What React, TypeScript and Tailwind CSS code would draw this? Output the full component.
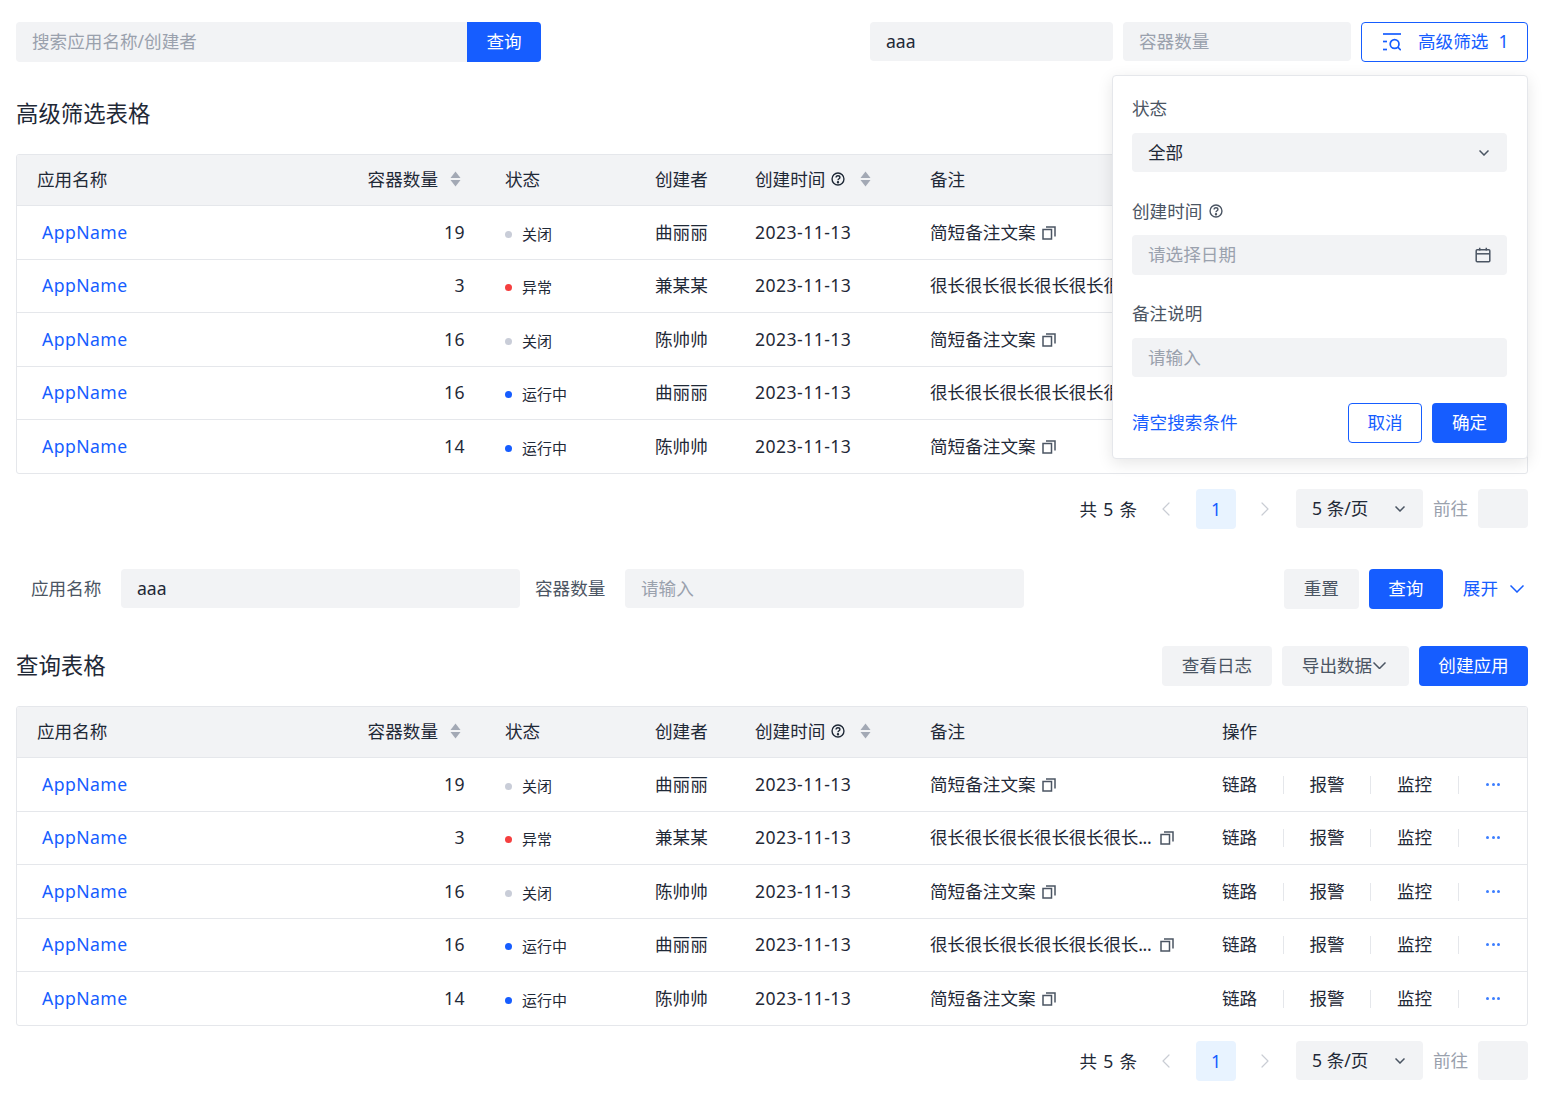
import React from 'react';
import { ChevronLeft, ChevronRight } from 'lucide-react';

const rows = [
  { count: 19, status: 'off', owner: '曲丽丽', long: false },
  { count: 3, status: 'err', owner: '兼某某', long: true },
  { count: 16, status: 'off', owner: '陈帅帅', long: false },
  { count: 16, status: 'run', owner: '曲丽丽', long: true },
  { count: 14, status: 'run', owner: '陈帅帅', long: false },
];

const rowHeights = ['h-[54px]', 'h-[53px] pb-px', 'h-[54px]', 'h-[53px] pb-px', 'h-[53px]'];

const statusMap: Record<string, { label: string; dot: string }> = {
  off: { label: '关闭', dot: 'bg-[#c9cdd8]' },
  err: { label: '异常', dot: 'bg-[#f53f3f]' },
  run: { label: '运行中', dot: 'bg-[#165dff]' },
};

const gridCols = 'grid grid-cols-[268px_200px_150px_100px_175px_292px_1fr] items-center';

const SortIcon = () => (
  <svg width="11" height="16" viewBox="0 0 11 16" className="shrink-0" fill="#a3a9b5">
    <path d="M5.5 0.5L10.5 7H0.5z" />
    <path d="M5.5 15.5L0.5 9H10.5z" />
  </svg>
);

const HelpIcon = ({ color = '#1f2937' }: { color?: string }) => (
  <svg width="14" height="14" viewBox="0 0 16 16" fill="none" stroke={color} strokeWidth="1.6" className="shrink-0">
    <circle cx="8" cy="8" r="6.8" />
    <path d="M5.8 6.4C5.8 5 6.8 4.2 8 4.2S10.2 5 10.2 6.2C10.2 7.7 8 7.7 8 9.5" />
    <circle cx="8" cy="11.8" r="0.6" fill={color} />
  </svg>
);

const CopyIcon = () => (
  <svg width="14" height="14" viewBox="0 0 14 14" fill="none" stroke="#4b5563" strokeWidth="1.5" className="shrink-0">
    <rect x="1" y="3.5" width="8.5" height="9.5" />
    <path d="M4 1H13V10.5" />
  </svg>
);

const FilterIcon = () => (
  <svg width="18" height="18" viewBox="0 0 18 18" fill="none" stroke="#165dff" strokeWidth="1.7" className="shrink-0">
    <path d="M0 1H18" />
    <path d="M0 8.5H4" />
    <path d="M0 16.5H4" />
    <circle cx="11.6" cy="11" r="4.4" />
    <path d="M14.8 14.2L17.8 17.2" />
  </svg>
);

const CalendarIcon = () => (
  <svg width="16" height="16" viewBox="0 0 16 16" fill="none" stroke="#4b5563" strokeWidth="1.5">
    <rect x="1.2" y="2.7" width="13.6" height="12" rx="1" />
    <path d="M1.2 6.8H14.8" />
    <path d="M4.7 0.8V3.5M11.3 0.8V3.5" />
  </svg>
);

const Chevron = ({ width = 10, color = '#4b5563', className }: { width?: number; color?: string; className?: string }) => (
  <svg width={width} height={width / 2 + 1} viewBox={`0 0 ${width} ${width / 2 + 1}`} fill="none" stroke={color} strokeWidth="1.5" className={`shrink-0 ${className ?? ''}`}>
    <path d={`M0.5 0.5L${width / 2} ${width / 2}L${width - 0.5} 0.5`} />
  </svg>
);

const Field = ({ value, placeholder, className }: { value?: string; placeholder?: string; className: string }) => (
  <div className={`flex h-[39px] items-center rounded-sm bg-[#f2f3f5] px-4 ${className}`}>
    {value ? <span className="text-[#1f2937]">{value}</span> : <span className="text-[#9aa1ad]">{placeholder}</span>}
  </div>
);

const Table = () => (
  <div className="overflow-hidden rounded-[3px] border border-[#e5e7eb]">
    <div className={`${gridCols} h-[51px] border-b border-[#e5e7eb] bg-[#f2f3f5] pb-[2px] text-[#1f2937]`}>
      <div className="pl-5">应用名称</div>
      <div className="flex items-center justify-end gap-3 pr-6">
        容器数量
        <SortIcon />
      </div>
      <div className="pl-5">状态</div>
      <div className="pl-5">创建者</div>
      <div className="flex items-center pl-5">
        创建时间
        <span className="ml-[6px]"><HelpIcon /></span>
        <span className="ml-[15px]"><SortIcon /></span>
      </div>
      <div className="pl-5">备注</div>
      <div className="pl-5">操作</div>
    </div>
    {rows.map((row, i) => (
      <div key={i} className={`${gridCols} ${rowHeights[i]} text-[#1f2937] ${i < rows.length - 1 ? 'border-b border-[#e5e7eb]' : ''}`}>
        <div className="pl-[25px] tracking-[0.45px] text-[#165dff]">AppName</div>
        <div className="pr-5 text-right tracking-[0.4px]">{row.count}</div>
        <div className="flex items-center pl-5 pt-[3px] text-[15px]">
          <span className={`h-[7px] w-[7px] rounded-full ${statusMap[row.status].dot}`} />
          <span className="ml-[10px]">{statusMap[row.status].label}</span>
        </div>
        <div className="pl-5">{row.owner}</div>
        <div className="pl-5 tracking-[0.45px]">2023-11-13</div>
        <div className={`flex items-center pl-5 ${row.long ? 'gap-2' : 'gap-[6px]'}`}>
          {row.long ? <span className="whitespace-nowrap tracking-[-0.25px]">很长很长很长很长很长很长...</span> : <span>简短备注文案</span>}
          <CopyIcon />
        </div>
        <div className="flex items-center pl-5">
          <span className="w-9">链路</span>
          <span className="ml-[24.5px] mr-[26px] h-[18px] w-px bg-[#e5e7eb]" />
          <span className="w-9">报警</span>
          <span className="ml-[24.5px] mr-[26px] h-[18px] w-px bg-[#e5e7eb]" />
          <span className="w-9">监控</span>
          <span className="ml-[24.5px] h-[18px] w-px bg-[#e5e7eb]" />
          <span className="ml-[27.5px] flex gap-[2.5px]">
            <i className="h-[3px] w-[3px] rounded-full bg-[#3c7eff]" />
            <i className="h-[3px] w-[3px] rounded-full bg-[#3c7eff]" />
            <i className="h-[3px] w-[3px] rounded-full bg-[#3c7eff]" />
          </span>
        </div>
      </div>
    ))}
  </div>
);

const Pagination = () => (
  <div className="mt-[15px] flex h-10 items-center justify-end">
    <span className="tracking-[0.8px] text-[#1f2937]">共 5 条</span>
    <ChevronLeft size={24} strokeWidth={1.2} className="ml-4 text-[#c9cdd4]" />
    <span className="ml-[18px] flex h-10 w-10 items-center justify-center rounded-sm bg-[#e8f3ff] text-[#165dff]">1</span>
    <ChevronRight size={24} strokeWidth={1.2} className="ml-[17px] text-[#c9cdd4]" />
    <div className="ml-[19px] flex h-[39px] w-[127px] items-center justify-between self-start rounded-sm bg-[#f2f3f5] pl-4 pr-[18px] text-[#1f2937]">
      5 条/页
      <Chevron />
    </div>
    <span className="ml-[10px] pb-[2px] text-[#9aa1ad]">前往</span>
    <div className="ml-[9.8px] h-[39px] w-[50px] self-start rounded-sm bg-[#f2f3f5]" />
  </div>
);

const PrimaryBtn = ({ label, className }: { label: string; className: string }) => (
  <button className={`flex h-10 items-center justify-center rounded-sm bg-[#165dff] pb-px text-white ${className}`}>{label}</button>
);

const GrayBtn = ({ children, className }: { children: React.ReactNode; className: string }) => (
  <button className={`flex h-10 items-center justify-center rounded-sm bg-[#f2f3f5] pb-px text-[#4b5563] ${className}`}>{children}</button>
);

const Popover = () => (
  <div className="absolute right-[17px] top-[75px] w-[416px] rounded-[4px] border border-[#e5e7eb] bg-white pb-[15px] pl-[19px] pr-5 pt-[21px] shadow-[0_4px_16px_rgba(0,0,0,0.1)]">
    <div className="flex h-6 items-center pb-[2px] text-[#4b5563]">状态</div>
    <div className="mt-3 flex h-[39px] items-center justify-between rounded-sm bg-[#f2f3f5] pl-4 pr-[18px] text-[#1f2937]">
      全部
      <Chevron />
    </div>
    <div className="mt-7 flex h-6 items-center gap-[7px] pb-[2px] text-[#4b5563]">
      创建时间
      <HelpIcon color="#4b5563" />
    </div>
    <div className="mt-[11px] flex h-10 items-center justify-between rounded-sm bg-[#f2f3f5] pb-px pl-4 pr-4 text-[#9aa1ad]">
      请选择日期
      <CalendarIcon />
    </div>
    <div className="mt-[27px] flex h-6 items-center pb-[2px] text-[#4b5563]">备注说明</div>
    <div className="mt-3 flex h-[39px] items-center rounded-sm bg-[#f2f3f5] px-4 text-[#9aa1ad]">请输入</div>
    <div className="mt-[26px] flex items-center">
      <span className="flex-1 pb-[2px] text-[#165dff]">清空搜索条件</span>
      <button className="flex h-10 w-[74px] items-center justify-center rounded-sm border border-[#165dff] pb-px text-[#165dff]">取消</button>
      <PrimaryBtn label="确定" className="ml-[10px] w-[75px]" />
    </div>
  </div>
);

export default function App() {
  return (
    <div className="relative min-h-[1098px] bg-white pl-4 pr-[17px] pt-[22px] font-['Noto_Sans','Noto_Sans_CJK_SC',sans-serif] text-[17.6px] leading-[23px]">
      <div className="flex items-start">
        <div className="flex w-[525px]">
          <div className="flex h-10 flex-1 items-center rounded-l-sm bg-[#f2f3f5] px-4 pb-px text-[#9aa1ad]">搜索应用名称/创建者</div>
          <PrimaryBtn label="查询" className="w-[74px] rounded-l-none" />
        </div>
        <Field value="aaa" className="ml-auto w-[243px]" />
        <Field placeholder="容器数量" className="ml-[10px] w-[228px]" />
        <button className="ml-[10px] flex h-10 w-[167px] items-center rounded-sm border border-[#165dff] pb-px pl-[21px] text-[#165dff]">
          <FilterIcon />
          <span className="ml-[17px]">高级筛选</span>
          <span className="ml-[10px]">1</span>
        </button>
      </div>

      <h2 className="mb-6 mt-9 text-[22.4px] font-normal leading-8 text-[#1f2937]">高级筛选表格</h2>
      <Table />
      <Pagination />

      <div className="mt-10 flex items-center">
        <span className="ml-[15px] pb-[2px] text-[#4b5563]">应用名称</span>
        <Field value="aaa" className="ml-[19.6px] w-[399px] self-start" />
        <span className="ml-[15px] pb-[2px] text-[#4b5563]">容器数量</span>
        <Field placeholder="请输入" className="ml-[19.6px] w-[399px] self-start" />
        <GrayBtn className="ml-auto w-[75px]">重置</GrayBtn>
        <PrimaryBtn label="查询" className="ml-[10px] w-[74px]" />
        <span className="ml-5 pb-[2px] text-[#165dff]">展开</span>
        <Chevron width={14} color="#165dff" className="ml-3 mr-1" />
      </div>

      <div className="mt-[37px] flex items-center">
        <h2 className="flex-1 text-[22.4px] font-normal leading-8 text-[#1f2937]">查询表格</h2>
        <GrayBtn className="w-[110px]">查看日志</GrayBtn>
        <GrayBtn className="ml-[10px] w-[127px] pr-[3px]">
          导出数据
          <Chevron width={13} className="ml-px" />
        </GrayBtn>
        <PrimaryBtn label="创建应用" className="ml-[10px] w-[109px]" />
      </div>

      <div className="mt-5">
        <Table />
      </div>
      <Pagination />

      <Popover />
    </div>
  );
}
